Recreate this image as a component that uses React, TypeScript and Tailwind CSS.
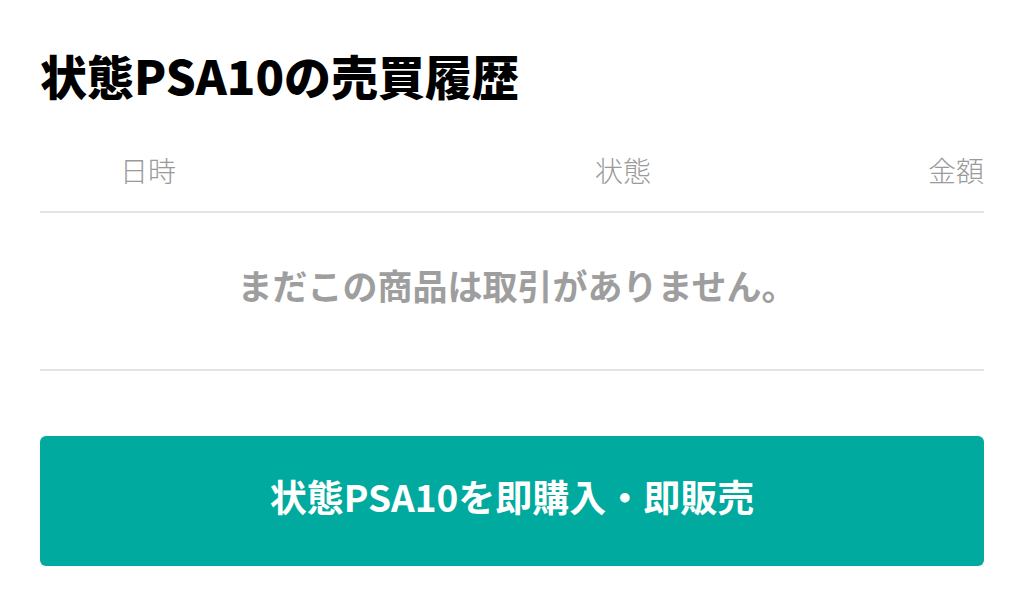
import React from "react";

const font = { fontFamily: '"Noto Sans CJK JP", "Noto Sans", sans-serif' };

export default function App() {
  return (
    <div className="w-[1024px] h-[596px] bg-white px-10 pt-[46px] overflow-hidden" style={font}>
      {/* Title */}
      <h1 className="text-[47px] leading-[58px] font-black text-black">
        状態PSA10の売買履歴
      </h1>

      {/* Table header */}
      <div className="mt-[33px] h-[76px] flex items-center border-b-2 border-[#e4e4e4] text-[28px] font-light text-[#9a9a9a]">
        <div className="w-[216px] text-center pb-2">日時</div>
        <div className="w-[259px]" />
        <div className="w-[216px] text-center pb-2">状態</div>
        <div className="flex-1 text-right pb-2">金額</div>
      </div>

      {/* Empty state */}
      <div className="h-[158px] flex items-center justify-center border-b-2 border-[#e4e4e4]">
        <p className="text-[35px] font-bold text-[#9e9e9e] pb-3 pl-[10px]">
          まだこの商品は取引がありません。
        </p>
      </div>

      {/* Action button */}
      <button className="mt-[65px] w-full h-[130px] rounded-md bg-[#00aa9e] text-white text-[37px] font-bold flex items-center justify-center pb-2">
        状態PSA10を即購入・即販売
      </button>
    </div>
  );
}
